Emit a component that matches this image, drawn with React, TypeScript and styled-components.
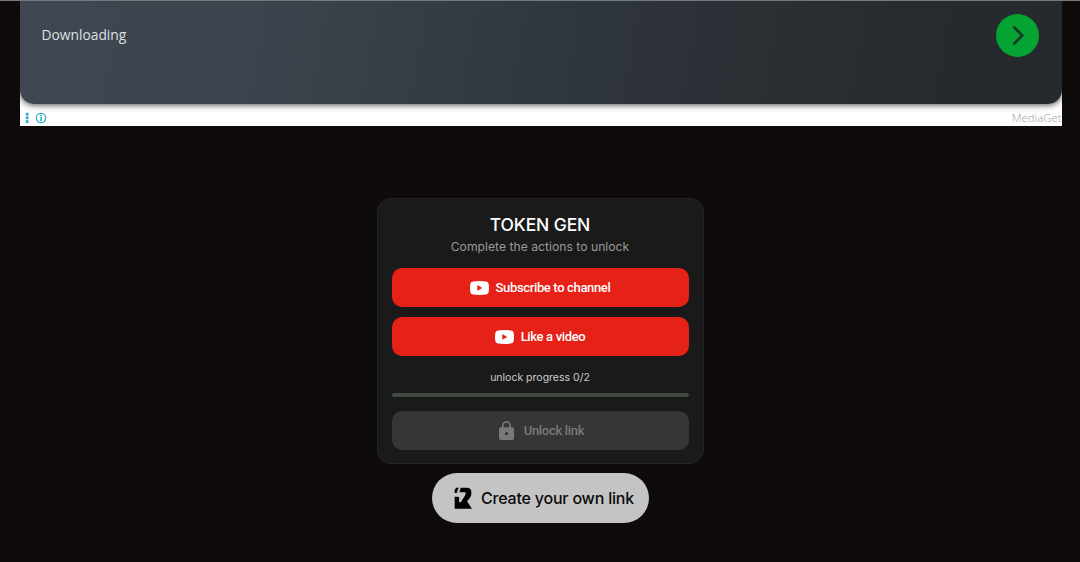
import React from 'react';
import styled, { createGlobalStyle } from 'styled-components';

interface ActionProps {
    label: string;
}

const actions = ['Subscribe to channel', 'Like a video'];

const YoutubeIcon: React.FC = () => (
    <svg width="19" height="14" viewBox="0 0 19 14">
        <path
            fill="#fff"
            fillRule="evenodd"
            d="M3 .4Q9.500-.3 16 .4Q18.500.6 18.700 3Q19.200 7 18.700 11Q18.500 13.300 16 13.600Q9.500 14.200 3 13.600Q.6 13.300.3 11Q-.2 7 .3 3Q.6.600 3 .4ZM7.300 4V9.800L12.300 6.900Z"
        />
    </svg>
);

const LockIcon: React.FC = () => (
    <svg width="15" height="19" viewBox="0 0 15 19">
        <path d="M3.800 7V4.600a3.700 3.700 0 0 1 7.400 0V7" fill="none" stroke="#797979" strokeWidth="1.700" />
        <path
            fill="#797979"
            fillRule="evenodd"
            d="M1.700 6.200h11.600Q15 6.200 15 7.900v9.400Q15 19 13.300 19H1.700Q0 19 0 17.300V7.900Q0 6.200 1.700 6.200ZM7.500 10.900a1.700 1.700 0 1 0 0 3.400a1.700 1.700 0 0 0 0-3.400Z"
        />
    </svg>
);

const BrandIcon: React.FC = () => (
    <svg width="18" height="22" viewBox="0 0 54 66">
        <path d="M2 18V8L7 2H14L8 18Z" />
        <path d="M20 2H40Q52 3 52 15V21Q52 27 48 32L39 43L54 65H2V29H16V45H20L34 23V17H16Z" />
        <path d="M17 16H34V23L20 46H16V29H11Z" fill="#c4c4c4" />
    </svg>
);

const ActionButton: React.FC<ActionProps> = ({ label }) => (
    <StyledButton>
        <YoutubeIcon />
        {label}
    </StyledButton>
);

const AdBanner: React.FC = () => (
    <Banner>
        <BannerPanel>
            <BannerText>Downloading</BannerText>
            <BannerArrow>
                <svg width="43" height="43" viewBox="0 0 43 43">
                    <path
                        d="M18.300 13.500L26.300 21.500L18.300 29.500"
                        fill="none"
                        stroke="#17382a"
                        strokeWidth="2.700"
                        strokeLinecap="round"
                    />
                </svg>
            </BannerArrow>
        </BannerPanel>
        <BannerFooter>
            <svg width="24" height="14" viewBox="0 0 24 14">
                <g fill="#28adc6">
                    <rect x=".8" y="1.800" width="2.700" height="2.700" />
                    <rect x=".8" y="5.500" width="2.700" height="2.700" />
                    <rect x=".8" y="9.200" width="2.700" height="2.700" />
                    <rect x="15.300" y="6" width="1.500" height="4" />
                    <rect x="15.200" y="3.700" width="1.700" height="1.500" />
                </g>
                <circle cx="16" cy="7" r="4.700" fill="none" stroke="#28adc6" strokeWidth="1.200" />
            </svg>
            <Advertiser>MediaGet</Advertiser>
        </BannerFooter>
    </Banner>
);

const App: React.FC = () => (
    <Page>
        <GlobalStyle />
        <AdBanner />
        <Card>
            <Title>TOKEN GEN</Title>
            <Subtitle>Complete the actions to unlock</Subtitle>
            <Actions>
                {actions.map((label) => (
                    <ActionButton key={label} label={label} />
                ))}
            </Actions>
            <ProgressText>unlock progress 0/2</ProgressText>
            <ProgressTrack />
            <UnlockButton disabled>
                <LockIcon />
                Unlock link
            </UnlockButton>
        </Card>
        <CreateLink>
            <BrandIcon />
            Create your own link
        </CreateLink>
    </Page>
);

const GlobalStyle = createGlobalStyle`
    * {
        box-sizing: border-box;
    }

    body {
        margin: 0;
        background: #0f0b0a;
        overflow: hidden;
    }

    svg {
        display: block;
        flex-shrink: 0;
    }
`;

const Page = styled.main`
    height: 562px;
    display: flex;
    flex-direction: column;
    align-items: center;
    border-top: 1px solid #737a7d;
    font-family: Inter, sans-serif;
`;

const Banner = styled.section`
    width: 1042px;
    height: 124.5px;
    margin-left: 1px;
    flex-shrink: 0;
    background: #fff;
    overflow: hidden;
    font-family: 'Open Sans', sans-serif;
`;

const BannerPanel = styled.div`
    height: 103px;
    padding: 13px 22.5px 0 22px;
    display: flex;
    align-items: flex-start;
    justify-content: space-between;
    border-radius: 0 0 14px 14px;
    background: linear-gradient(100deg, #3f4852 0%, #3b434c 25%, #30373f 50%, #2b2e33 72%, #26292e 90%);
    box-shadow: 0 1px 6px rgba(0, 0, 0, 0.7);
`;

const BannerText = styled.span`
    margin-top: 11px;
    color: #dde0e4;
    font-size: 13.8px;
    line-height: 20px;
`;

const BannerArrow = styled.div`
    width: 43px;
    height: 43px;
    border-radius: 50%;
    background: #05a432;
`;

const BannerFooter = styled.div`
    height: 21px;
    padding: 7px 0 0 5px;
    display: flex;
    justify-content: space-between;
`;

const Advertiser = styled.span`
    color: #a0a0a0;
    font-size: 11.4px;
    font-weight: 300;
    line-height: 14px;
`;

const Card = styled.section`
    width: 327px;
    height: 266px;
    margin-top: 72.5px;
    padding: 15px 14px 13px;
    flex-shrink: 0;
    display: flex;
    flex-direction: column;
    border: 1px solid #242424;
    border-radius: 14px;
    background: #1a1a1a;
    text-align: center;
`;

const Title = styled.h1`
    margin: 0;
    color: #fff;
    font-size: 17.5px;
    font-weight: 500;
    letter-spacing: -0.15px;
    line-height: 22px;
`;

const Subtitle = styled.p`
    margin: 2px 0 0;
    color: #999;
    font-size: 12.2px;
    line-height: 18px;
`;

const Actions = styled.div`
    margin-top: 12px;
    display: flex;
    flex-direction: column;
    gap: 10px;
`;

const StyledButton = styled.button`
    height: 39px;
    width: 100%;
    padding: 0;
    flex-shrink: 0;
    display: flex;
    align-items: center;
    justify-content: center;
    gap: 7px;
    border: 0;
    border-radius: 10px;
    background: #e62117;
    color: #fff;
    font: 500 13px Roboto, sans-serif;
    letter-spacing: -0.35px;
`;

const ProgressText = styled.div`
    margin-top: 13.5px;
    color: #ccc;
    font-size: 10.5px;
    line-height: 15px;
`;

const ProgressTrack = styled.div`
    height: 4px;
    margin: 8px 0 14px;
    flex-shrink: 0;
    border-radius: 2px;
    background: #3e4b3e;
`;

const UnlockButton = styled(StyledButton)`
    gap: 10px;
    padding-left: 3px;
    background: #363636;
    color: #797979;
    letter-spacing: -0.3px;
`;

const CreateLink = styled.button`
    width: 217px;
    height: 50px;
    margin-top: 8.5px;
    padding: 0 0 0 8px;
    flex-shrink: 0;
    display: flex;
    align-items: center;
    justify-content: center;
    gap: 9px;
    border: 0;
    border-radius: 25px;
    background: #c4c4c4;
    color: #0a0a0a;
    font: 500 16px Inter, sans-serif;
    letter-spacing: -0.2px;
`;

export default App;
